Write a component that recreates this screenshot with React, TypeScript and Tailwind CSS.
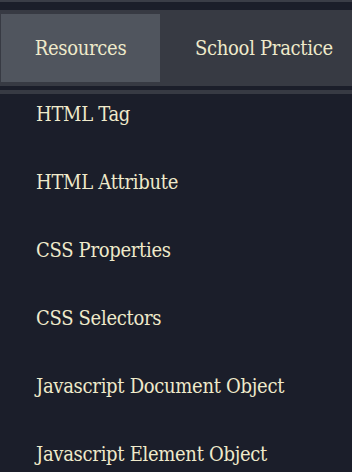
import React from "react";

const links = [
  "HTML Tag",
  "HTML Attribute",
  "CSS Properties",
  "CSS Selectors",
  "Javascript Document Object",
  "Javascript Element Object",
];

export default function App() {
  return (
    <div className="h-[472px] w-[352px] overflow-hidden bg-[#1b1e2a] text-[#efeacb] tracking-[-0.3px] [font-family:'DejaVu_Serif_Condensed','DejaVu_Serif',serif] [font-stretch:condensed]">
      {/* top strip */}
      <div className="h-[2px] bg-[#3a3d47]" />
      <div className="h-[8px]" />

      {/* tabs */}
      <div className="flex h-[76px] items-center overflow-hidden bg-[#373a43] pl-px">
        <div className="flex h-[68px] w-[159px] shrink-0 items-center justify-center bg-[#50555e] text-[20px]">
          Resources
        </div>
        <div className="flex h-[68px] shrink-0 items-center whitespace-nowrap px-[35px] text-[20px]">
          School Practice
        </div>
      </div>

      <div className="h-[4px]" />
      <div className="h-[4px] bg-[#373a43]" />

      {/* menu */}
      <ul className="pt-[8px]">
        {links.map((l) => (
          <li key={l} className="pb-[44px] pl-9 text-[20px] leading-[24px]">
            {l}
          </li>
        ))}
      </ul>
    </div>
  );
}
